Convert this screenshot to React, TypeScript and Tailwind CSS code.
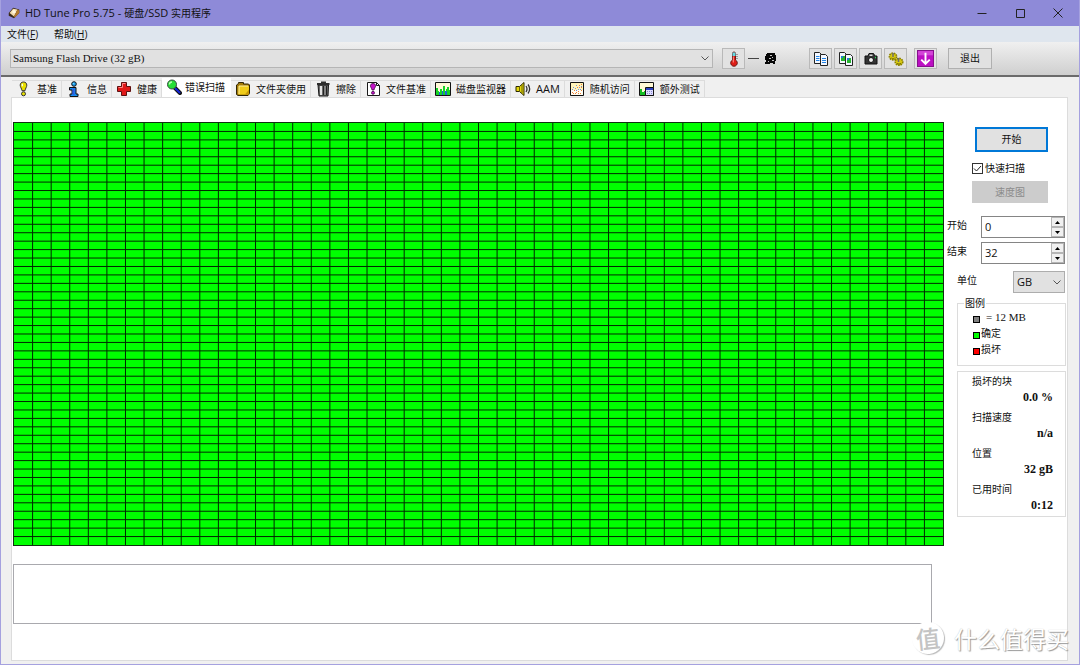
import React, { useState } from "react";

const COLS = 50;
const ROWS = 50;

type IconProps = { className?: string };

function Svg({ className = "h-4 w-4", children }: { className?: string; children: React.ReactNode }) {
  return (
    <svg viewBox="0 0 16 16" className={`shrink-0 ${className}`} aria-hidden="true">
      {children}
    </svg>
  );
}

const AppIcon = ({ className }: IconProps) => (
  <Svg className={className}>
    <path d="M2 8 7 2l7 2v4l-6 6-6-3z" fill="#3a2a18" />
    <path d="M3 8l4-5 5 1-4 8z" fill="#f3dcae" />
    <path d="M8 12l4-8 2 1v3l-5 5z" fill="#b57a2c" />
    <circle cx="8" cy="6.5" r="2" fill="#fff6df" />
  </Svg>
);

const BulbIcon = () => (
  <Svg>
    <path d="M7.500 1C5.400 1 4.200 2.300 4.200 4.200c0 1.900 1.500 3.300 1.800 5.500h3c.3-2.200 1.800-3.600 1.800-5.500C10.800 2.300 9.600 1 7.500 1z" fill="#e8e000" stroke="#333" />
    <path d="M6.300 2.800v2.500" stroke="#fff" strokeWidth="1.200" />
    <circle cx="7.500" cy="12.800" r="2" fill="#e8e000" stroke="#333" />
  </Svg>
);

const InfoIcon = () => (
  <Svg>
    <circle cx="8" cy="3" r="2.300" fill="#1fa2f5" stroke="#111" />
    <path d="M3.500 6.500h6.500v6.500h2v2.500h-8V13H6V9H3.500z" fill="#168df0" stroke="#111" />
    <path d="M7.500 7.500v6.500" stroke="#2f5be0" strokeWidth="2" />
    <path d="M6.800 2.600h1.400" stroke="#7fe0ff" />
  </Svg>
);

const CrossIcon = () => (
  <Svg>
    <path d="M5.500 1.500h5v4h4v5h-4v4h-5v-4h-4v-5h4z" fill="#e01818" stroke="#5d1010" />
    <path d="M6.500 2.500h3M2.500 6.500h4v-4" fill="none" stroke="#ff8585" />
  </Svg>
);

const ScanIcon = () => (
  <Svg>
    <path d="M9 9l5 5" stroke="#111" strokeWidth="4" strokeLinecap="round" />
    <path d="M9.500 9.500l4 4" stroke="#1525d8" strokeWidth="2" strokeLinecap="round" />
    <circle cx="6" cy="5.500" r="4.500" fill="#27df35" stroke="#3a4a44" />
    <path d="M3.500 5.500C3.500 4 4.500 3 6 3" stroke="#b9ffb5" strokeWidth="1.400" fill="none" />
  </Svg>
);

const FolderIcon = () => (
  <Svg>
    <path d="M1.500 4l2-1.500v-1h5v1.500h5l1 1v8.500l-1.500 2h-10l-1.500-1z" fill="#a47b08" stroke="#2f2605" />
    <path d="M4 5h10v7.500l-1 1H3.500z" fill="#f0cc1a" />
    <path d="M4 13V5h9" stroke="#fff2a0" fill="none" />
    <path d="M10 13.500l4-5v5z" fill="#c79605" />
  </Svg>
);

const TrashIcon = () => (
  <Svg>
    <path d="M3 4h10.500l-.5 11H4z" fill="#6a6a6a" stroke="#171717" />
    <path d="M2 3h12.500M6 1.500h5" stroke="#2c2c2c" strokeWidth="2" />
    <path d="M6 5v9" stroke="#e4e4e4" strokeWidth="2" />
    <path d="M8.500 5v9M11.500 5v9" stroke="#222" />
    <path d="M10 5v9" stroke="#999" />
  </Svg>
);

const FileBenchIcon = () => (
  <Svg>
    <path d="M2.500 1.500h9l3 3v10h-12z" fill="#fff" stroke="#1a1a1a" />
    <path d="M11.500 1.500v3h3" fill="none" stroke="#1a1a1a" />
    <path d="M8 2.500c-1.700 0-2.600 1-2.600 2.300 0 1.500 1.400 2.400 1.600 4.200h2c.2-1.800 1.600-2.700 1.600-4.200 0-1.300-.9-2.300-2.600-2.300z" fill="#c412c8" stroke="#400a45" strokeWidth=".8" />
    <circle cx="8" cy="11.800" r="1.500" fill="#c412c8" stroke="#400a45" strokeWidth=".8" />
  </Svg>
);

const MonitorIcon = () => (
  <Svg>
    <path d="M.5 1.500h15v13H.5z" fill="#fff9d6" stroke="#111" />
    <path d="M1 14V7h2v3h1v1h1V8h2v2h1V5h2v5h1V8h1V6h2v3h1v5z" fill="#16d426" />
    <path d="M4 11h1v3H4zM7 10h1v4H7zM10 10h2v4h-2z" fill="#1b62d8" />
  </Svg>
);

const SpeakerIcon = () => (
  <Svg>
    <path d="M1 5.500h3.500l4.500-4v13l-4.500-4H1z" fill="#e5d80c" stroke="#2b2800" />
    <path d="M4.500 5.500v5M7 4v8" stroke="#6b6400" />
    <path d="M11 5c1.200 1.800 1.200 4.200 0 6M13 3.500c2 2.700 2 6.300 0 9" stroke="#333" strokeWidth="1.300" fill="none" />
  </Svg>
);

const RandomIcon = () => (
  <Svg>
    <path d="M1.500 1.500h13v13h-13z" fill="#fff3b8" stroke="#111" />
    <path d="M2 9h12v5H2z" fill="#fffdf2" />
    <g fill="#f0803a">
      <path d="M3 11h1v1H3zM6 12h1v1H6zM5 9h1v1H5zM9 10h1v1H9zM11 12h1v1h-1zM8 6h1v1H8zM10 4h1v1h-1zM12 3h1v1h-1zM12 6h1v1h-1zM7 11h1v1H7zM12 9h1v1h-1zM4 12h1v1H4zM9 12h1v1H9z" />
    </g>
    <g fill="#6d8fe0">
      <path d="M3 8h1v1H3zM4 6h1v1H4zM6 7h1v1H6zM7 9h1v1H7zM9 8h1v1H9zM11 8h1v1h-1zM10 6h1v1h-1zM7 4h1v1H7zM12 5h1v1h-1z" />
    </g>
  </Svg>
);

const ExtraIcon = () => (
  <Svg>
    <path d="M.5 1.500h14v13H.500z" fill="#fff9d6" stroke="#111" />
    <path d="M1 14V8h2v3h2v-1h2v4z" fill="#13bd23" />
    <path d="M6.500 6.500h8v8h-8z" fill="#dcdcff" stroke="#111" />
    <path d="M7 7h7v2H7z" fill="#2a3fbf" />
    <path d="M8 10.500h6M8 12.500h6" stroke="#8b86cf" strokeDasharray="1 1" />
  </Svg>
);

const ThermoIcon = () => (
  <Svg>
    <path d="M6.500 2.500a1.500 1.500 0 0 1 3 0V9a3.300 3.300 0 1 1-3 0z" fill="#df1d17" stroke="#6b1915" />
    <path d="M6.500 1.500h3V5h-3z" fill="#63dbe5" />
    <path d="M7.300 5.500v6" stroke="#ff948a" />
    <path d="M10.500 3.500h1M10.500 5.500h1M10.500 7.500h1" stroke="#555" />
  </Svg>
);

function CopyIcon({ picture = false }: { picture?: boolean }) {
  return (
    <Svg>
      <path d="M1.500 1.500h5l2 2v9h-7z" fill="#f4f8ff" stroke="#222" />
      <path d="M7.500 3.500h5l2 2v9h-7z" fill="#f4f8ff" stroke="#222" />
      {picture ? (
        <>
          <path d="M3 5h4v5H3zM9 7h4v5H9z" fill="#25b52e" />
          <path d="M3 5h2v2H3zM9 7h2v2H9z" fill="#247bd8" />
        </>
      ) : (
        <path d="M3 5.500h3.500M3 7.500h3.500M3 9.500h3.500M9 7.500h4M9 9.500h4M9 11.500h4" stroke="#2384e6" />
      )}
    </Svg>
  );
}

const CameraIcon = () => (
  <Svg>
    <path d="M2 5h3l1-2.500h4.500L12 5h2v8H2z" fill="#333" stroke="#111" />
    <path d="M6.500 3.500h3V5h-3z" fill="#ddd" />
    <circle cx="8" cy="9" r="2.500" fill="#f1f1f1" stroke="#111" />
    <path d="M12 6.500h1" stroke="#27df55" strokeWidth="1.500" />
  </Svg>
);

const GearIcon = () => (
  <Svg>
    <ellipse cx="5" cy="5.500" rx="3.600" ry="3.400" fill="#d8ca10" stroke="#8a7f00" strokeWidth="1.600" strokeDasharray="1.600 .8" />
    <ellipse cx="11" cy="10.800" rx="3.800" ry="3.400" fill="#d8ca10" stroke="#8a7f00" strokeWidth="1.600" strokeDasharray="1.600 .8" />
    <path d="M5 2v4M10.500 7v4" stroke="#6d6d6d" strokeWidth="1.500" />
    <path d="M3.500 7c1 1 2 1 3 0M9 12.300c1 1 3 1 4 0" stroke="#6f6600" fill="none" />
  </Svg>
);

const DownIcon = () => (
  <Svg className="h-[17px] w-[17px]">
    <path d="M.5.5h15v15H.5z" fill="#bd0fc4" stroke="#86108c" />
    <path d="M1 1h14v4H1z" fill="#d445d8" />
    <path d="M8 2.500v10M4 9l4 4 4-4" stroke="#fff" strokeWidth="1.800" fill="none" />
  </Svg>
);

const BlobIcon = () => (
  <svg viewBox="0 0 11 11" className="ml-[6px] h-[11px] w-[11px] shrink-0" aria-hidden="true">
    <path d="M2 0h8v2h1v6h-1v3H8v-1H5v1H0V9h1V7H0V3h1V1h1z" fill="#080808" />
    <path d="M5 2h2v1H5zM7 4h1v1H7zM4 5h2v1H4zM7 7h2v1H7zM3 8h1v1H3z" fill="#c8c8c8" />
  </svg>
);

const Chevron = ({ className }: IconProps) => (
  <svg viewBox="0 0 8 5" className={`pointer-events-none absolute h-[5px] w-2 ${className}`} aria-hidden="true">
    <path d="M.5.500 4 4 7.500.500" fill="none" stroke="#555" />
  </svg>
);

const tabs = [
  { label: "基准", icon: BulbIcon },
  { label: "信息", icon: InfoIcon },
  { label: "健康", icon: CrossIcon },
  { label: "错误扫描", icon: ScanIcon },
  { label: "文件夹使用", icon: FolderIcon },
  { label: "擦除", icon: TrashIcon },
  { label: "文件基准", icon: FileBenchIcon },
  { label: "磁盘监视器", icon: MonitorIcon },
  { label: "AAM", icon: SpeakerIcon },
  { label: "随机访问", icon: RandomIcon },
  { label: "额外测试", icon: ExtraIcon },
];

function ToolButton({ label, children }: { label: string; children: React.ReactNode }) {
  return (
    <button
      type="button"
      aria-label={label}
      className="flex h-[21px] w-[23px] shrink-0 items-center justify-center border border-[#b9b9b9] bg-[#e2e2e2]"
    >
      {children}
    </button>
  );
}

function BlockMap() {
  const lines: string[] = [];
  for (let c = 1; c < COLS; c++) lines.push(`M${c} 0V${ROWS}`);
  for (let r = 1; r < ROWS; r++) lines.push(`M0 ${r}H${COLS}`);
  return (
    <div className="relative min-h-0 flex-1 border border-[#103010] bg-[#00ff00]">
      <svg
        viewBox={`0 0 ${COLS} ${ROWS}`}
        preserveAspectRatio="none"
        className="absolute inset-0 h-full w-full"
        role="img"
        aria-label="错误扫描"
      >
        <path
          d={lines.join("")}
          fill="none"
          stroke="#002800"
          strokeWidth="1"
          vectorEffect="non-scaling-stroke"
          shapeRendering="crispEdges"
        />
      </svg>
    </div>
  );
}

function Spinner({ id, label, initial }: { id: string; label: string; initial: number }) {
  const [value, setValue] = useState(initial);
  return (
    <div className="flex justify-between">
      <label htmlFor={id} className="pt-[3px] leading-3">
        {label}
      </label>
      <div className="flex h-[22px] w-[84px] border border-[#858585] bg-white">
        <input
          id={id}
          value={value}
          onChange={(e) => setValue(Number(e.target.value) || 0)}
          className="w-0 min-w-0 flex-1 px-[3px] text-[11px] outline-none"
        />
        <div className="flex w-[13px] flex-col">
          <button
            type="button"
            aria-label={`${label} +`}
            onClick={() => setValue(value + 1)}
            className="flex flex-1 items-center justify-center border border-[#b5b5b5] bg-[#f0f0f0]"
          >
            <svg viewBox="0 0 5 3" className="h-[3px] w-[5px]">
              <path d="M0 3 2.500 0 5 3z" />
            </svg>
          </button>
          <button
            type="button"
            aria-label={`${label} -`}
            onClick={() => setValue(Math.max(0, value - 1))}
            className="flex flex-1 items-center justify-center border border-[#b5b5b5] bg-[#f0f0f0]"
          >
            <svg viewBox="0 0 5 3" className="h-[3px] w-[5px]">
              <path d="M0 0 2.500 3 5 0z" />
            </svg>
          </button>
        </div>
      </div>
    </div>
  );
}

function Stat({ label, value }: { label: string; value: string }) {
  return (
    <div>
      <dt className="leading-4">{label}</dt>
      <dd className="pr-3 text-right font-['Liberation_Serif',serif] text-[12px] leading-4 font-bold">{value}</dd>
    </div>
  );
}

export default function App() {
  const [active, setActive] = useState("错误扫描");
  const [quick, setQuick] = useState(true);

  return (
    <div className="relative flex min-h-screen flex-col overflow-hidden border-x border-b border-[#a5a1df] bg-[#f0f0f0] font-['Open_Sans','Noto_Sans_CJK_SC',sans-serif] text-[10px] text-[#111]">
      <header className="flex h-[26px] shrink-0 items-center bg-[#8e8ad8] pr-[2px]">
        <AppIcon className="ml-[6px] h-[14px] w-[14px]" />
        <h1 className="ml-1 flex-1 text-[11px] leading-4">
          HD Tune Pro 5.75 - <span className="text-[10px]">硬盘</span>/SSD <span className="text-[10px]">实用程序</span>
        </h1>
        <div className="flex h-full">
          <button type="button" aria-label="最小化" className="flex w-[38px] items-center justify-center">
            <svg viewBox="0 0 10 10" className="h-[10px] w-[10px]">
              <path d="M.5 5.500h9" stroke="#222" />
            </svg>
          </button>
          <button type="button" aria-label="最大化" className="flex w-[38px] items-center justify-center">
            <svg viewBox="0 0 10 10" className="h-[10px] w-[10px]">
              <path d="M1.500 1.500h8v8h-8z" fill="none" stroke="#222" />
            </svg>
          </button>
          <button type="button" aria-label="关闭" className="flex w-[38px] items-center justify-center">
            <svg viewBox="0 0 10 10" className="h-[10px] w-[10px]">
              <path d="M.5.500l9 9M9.500.500l-9 9" stroke="#222" />
            </svg>
          </button>
        </div>
      </header>

      <nav className="flex h-4 shrink-0 items-center gap-4 bg-[#dfe6ee] pl-[6px] leading-4">
        <button type="button">
          文件(<u>F</u>)
        </button>
        <button type="button">
          帮助(<u>H</u>)
        </button>
      </nav>

      <div className="flex h-[35px] shrink-0 items-center border-b-2 border-[#6b6b6b] bg-linear-to-b from-[#f0f0f0] to-[#cfcfcf] pr-[87px] pl-[9px]">
        <div className="relative min-w-0 flex-1">
          <select
            aria-label="驱动器"
            className="block h-[19px] w-full appearance-none border border-[#b5b5b5] bg-[#e1e1e1] px-[2px] font-['Liberation_Serif',serif] text-[11px]"
          >
            <option>Samsung Flash Drive (32 gB)</option>
          </select>
          <Chevron className="top-[7px] right-[4px]" />
        </div>
        <div className="ml-[9px] flex items-center">
          <ToolButton label="温度">
            <ThermoIcon />
          </ToolButton>
          <span className="ml-[3px] h-px w-[11px] bg-[#444]" />
          <BlobIcon />
        </div>
        <div className="ml-[33px] flex gap-[2px]">
          <ToolButton label="复制文本">
            <CopyIcon />
          </ToolButton>
          <ToolButton label="复制图像">
            <CopyIcon picture />
          </ToolButton>
          <ToolButton label="截图">
            <CameraIcon />
          </ToolButton>
          <ToolButton label="选项">
            <GearIcon />
          </ToolButton>
        </div>
        <div className="ml-[7px] flex gap-[11px]">
          <ToolButton label="保存">
            <DownIcon />
          </ToolButton>
          <button type="button" className="h-[21px] w-[44px] border border-[#b0b0b0] bg-[#e1e1e1]">
            退出
          </button>
        </div>
      </div>

      <div className="flex flex-1 flex-col pt-[1px] pr-[11px] pb-[3px] pl-[10px]">
        <div role="tablist" className="flex items-end pl-px">
          {tabs.map(({ label, icon: Icon }) => {
            const on = label === active;
            return (
              <button
                key={label}
                type="button"
                role="tab"
                aria-selected={on}
                onClick={() => setActive(label)}
                className={
                  on
                    ? "flex h-[19px] items-center gap-[3px] bg-white pr-[6px] pb-[2px] pl-1 leading-4"
                    : "flex h-[17px] items-center gap-[5px] border-t border-r border-[#dcdcdc] bg-[#f0f0f0] pr-1 pl-1 leading-4"
                }
              >
                <Icon />
                {label === "AAM" ? <span className="text-[11px]">{label}</span> : label}
              </button>
            );
          })}
        </div>

        <main className="flex flex-1 border border-[#dcdcdc] bg-white">
          <section className="flex min-w-0 flex-1 flex-col pt-6 pb-[36px] pl-px">
            <BlockMap />
            <div className="mt-[18px] mr-3 h-[60px] border border-[#a9a9ae] bg-white" role="log" />
          </section>

          <aside className="w-[123px] shrink-0 pt-[29px] pr-[2px] pl-[3px]">
            <div className="flex flex-col pr-[17px] pl-[25px]">
              <button type="button" className="ml-[3px] h-[25px] border-2 border-[#0078d7] bg-[#e1e1e1]">
                开始
              </button>
              <label className="mt-[8px] flex h-4 items-center gap-[2px] leading-4 whitespace-nowrap">
                <span className="relative flex h-[11px] w-[11px]">
                  <input
                    type="checkbox"
                    checked={quick}
                    onChange={(e) => setQuick(e.target.checked)}
                    className="h-[11px] w-[11px] appearance-none border border-[#333] bg-white"
                  />
                  {quick && (
                    <svg viewBox="0 0 11 11" className="pointer-events-none absolute inset-0 h-[11px] w-[11px]">
                      <path d="M2 5.500 4.500 8 9 3" fill="none" stroke="#222" />
                    </svg>
                  )}
                </span>
                快速扫描
              </label>
              <button type="button" disabled className="mt-[5px] h-[22px] bg-[#cccccc] text-[#8b8b8b]">
                速度图
              </button>
            </div>

            <div className="mt-[13px] flex flex-col gap-[4px]">
              <Spinner id="range-start" label="开始" initial={0} />
              <Spinner id="range-end" label="结束" initial={32} />
            </div>

            <div className="mt-[7px] flex justify-between pl-[10px]">
              <label htmlFor="unit" className="pt-[3px] leading-3">
                单位
              </label>
              <div className="relative w-[52px]">
                <select
                  id="unit"
                  className="block h-[22px] w-full appearance-none border border-[#adadad] bg-[#e1e1e1] px-[3px] text-[11px]"
                >
                  <option>GB</option>
                  <option>MB</option>
                </select>
                <Chevron className="top-[9px] right-[4px]" />
              </div>
            </div>

            <fieldset className="mt-[4px] -mr-px ml-[10px] h-[69px] border border-[#dcdcdc] pl-[15px]">
              <legend className="-ml-[9px] px-px leading-3">图例</legend>
              <ul className="leading-4">
                <li className="flex h-4 items-center gap-[6px]">
                  <i className="mt-1 h-[7px] w-[7px] border border-black bg-[#808080]" />
                  <span className="font-['Liberation_Serif',serif] text-[11px]">= 12 MB</span>
                </li>
                <li className="flex h-4 items-center gap-px">
                  <i className="mt-1 h-[7px] w-[7px] border border-black bg-[#00ff00]" />
                  确定
                </li>
                <li className="flex h-4 items-center gap-px">
                  <i className="mt-1 h-[7px] w-[7px] border border-black bg-[#ff0000]" />
                  损坏
                </li>
              </ul>
            </fieldset>

            <dl className="mt-[5px] -mr-px ml-[10px] flex h-[146px] flex-col justify-between border border-[#dcdcdc] pt-px pb-[3px] pl-[14px]">
              <Stat label="损坏的块" value="0.0 %" />
              <Stat label="扫描速度" value="n/a" />
              <Stat label="位置" value="32 gB" />
              <Stat label="已用时间" value="0:12" />
            </dl>
          </aside>
        </main>
      </div>

      <div className="pointer-events-none absolute right-[10px] bottom-[10px] flex items-center gap-[10px] font-['Noto_Sans_CJK_SC',sans-serif]">
        <span className="flex h-8 w-8 -rotate-6 items-center justify-center rounded-full bg-white text-[24px] leading-8 font-medium text-[#c4c4c4] shadow-[1px_1px_1px_#bbb]">
          值
        </span>
        <span className="text-[23px] leading-8 text-white [text-shadow:1px_1px_1px_#999,0_0_1px_#bbb]">什么值得买</span>
      </div>
    </div>
  );
}
